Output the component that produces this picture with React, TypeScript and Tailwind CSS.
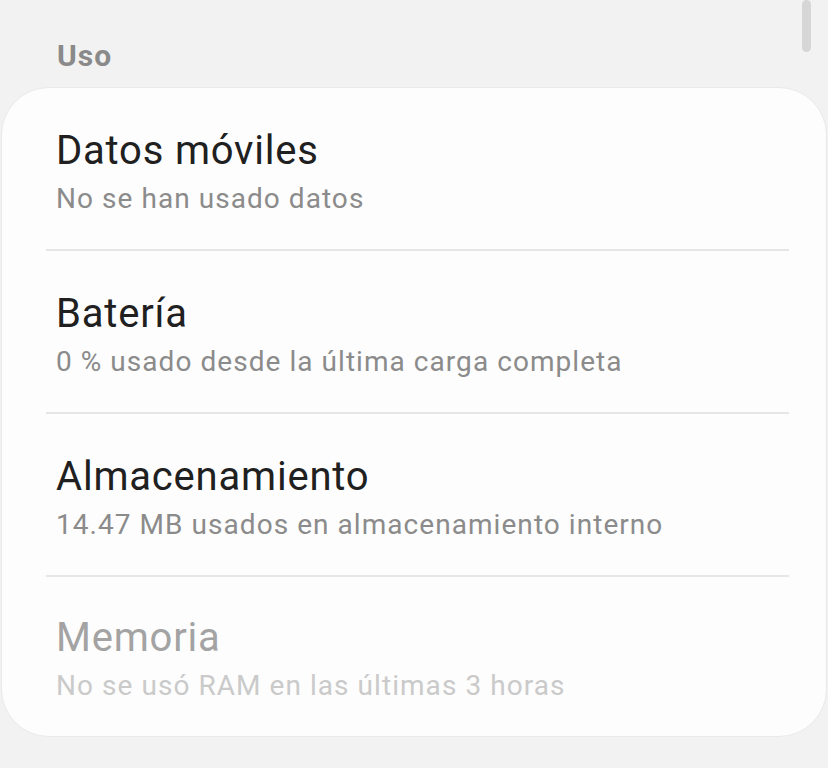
import React from 'react'

interface UsageItem {
    title: string
    summary: string
    disabled?: boolean
}

const items: UsageItem[] = [
    { title: 'Datos móviles', summary: 'No se han usado datos' },
    { title: 'Batería', summary: '0 % usado desde la última carga completa' },
    { title: 'Almacenamiento', summary: '14.47 MB usados en almacenamiento interno' },
    { title: 'Memoria', summary: 'No se usó RAM en las últimas 3 horas', disabled: true },
]

const App: React.FC = () => {
    return (
        <div className="relative min-h-[768px] bg-[#f2f2f2] font-['Roboto','Noto_Sans',sans-serif] overflow-hidden">
            {/* scrollbar */}
            <div className="absolute right-[17px] top-0 w-[9px] h-[52px] rounded-full bg-[#d6d6d6]" />

            <div className="pt-[36px] pl-[57px] text-[30px] leading-[40px] font-bold tracking-[1px] text-[#8a8a8a]">Uso</div>

            <div className="mx-[1px] mt-[11px] bg-[#fdfdfd] border border-[#e9e9e9] rounded-[48px]">
                {items.map((item, i) => (
                    <div key={item.title}>
                        {i > 0 && <div className="ml-[44px] mr-[37px] h-[2px] bg-[#e6e6e6]" />}
                        <div className={i === items.length - 1 ? 'pl-[54px] pt-[37px] pb-[32px]' : 'pl-[54px] pt-[39px] pb-[32px]'}>
                            <div className={`text-[40px] leading-[48px] tracking-[0.8px] ${item.disabled ? 'text-[#a3a3a3]' : 'text-[#202020]'}`}>
                                {item.title}
                            </div>
                            <div className={`mt-[6px] text-[28px] leading-[36px] tracking-[1.05px] ${item.disabled ? 'text-[#cacaca]' : 'text-[#8b8b8b]'}`}>
                                {item.summary}
                            </div>
                        </div>
                    </div>
                ))}
            </div>
        </div>
    )
}

export default App
